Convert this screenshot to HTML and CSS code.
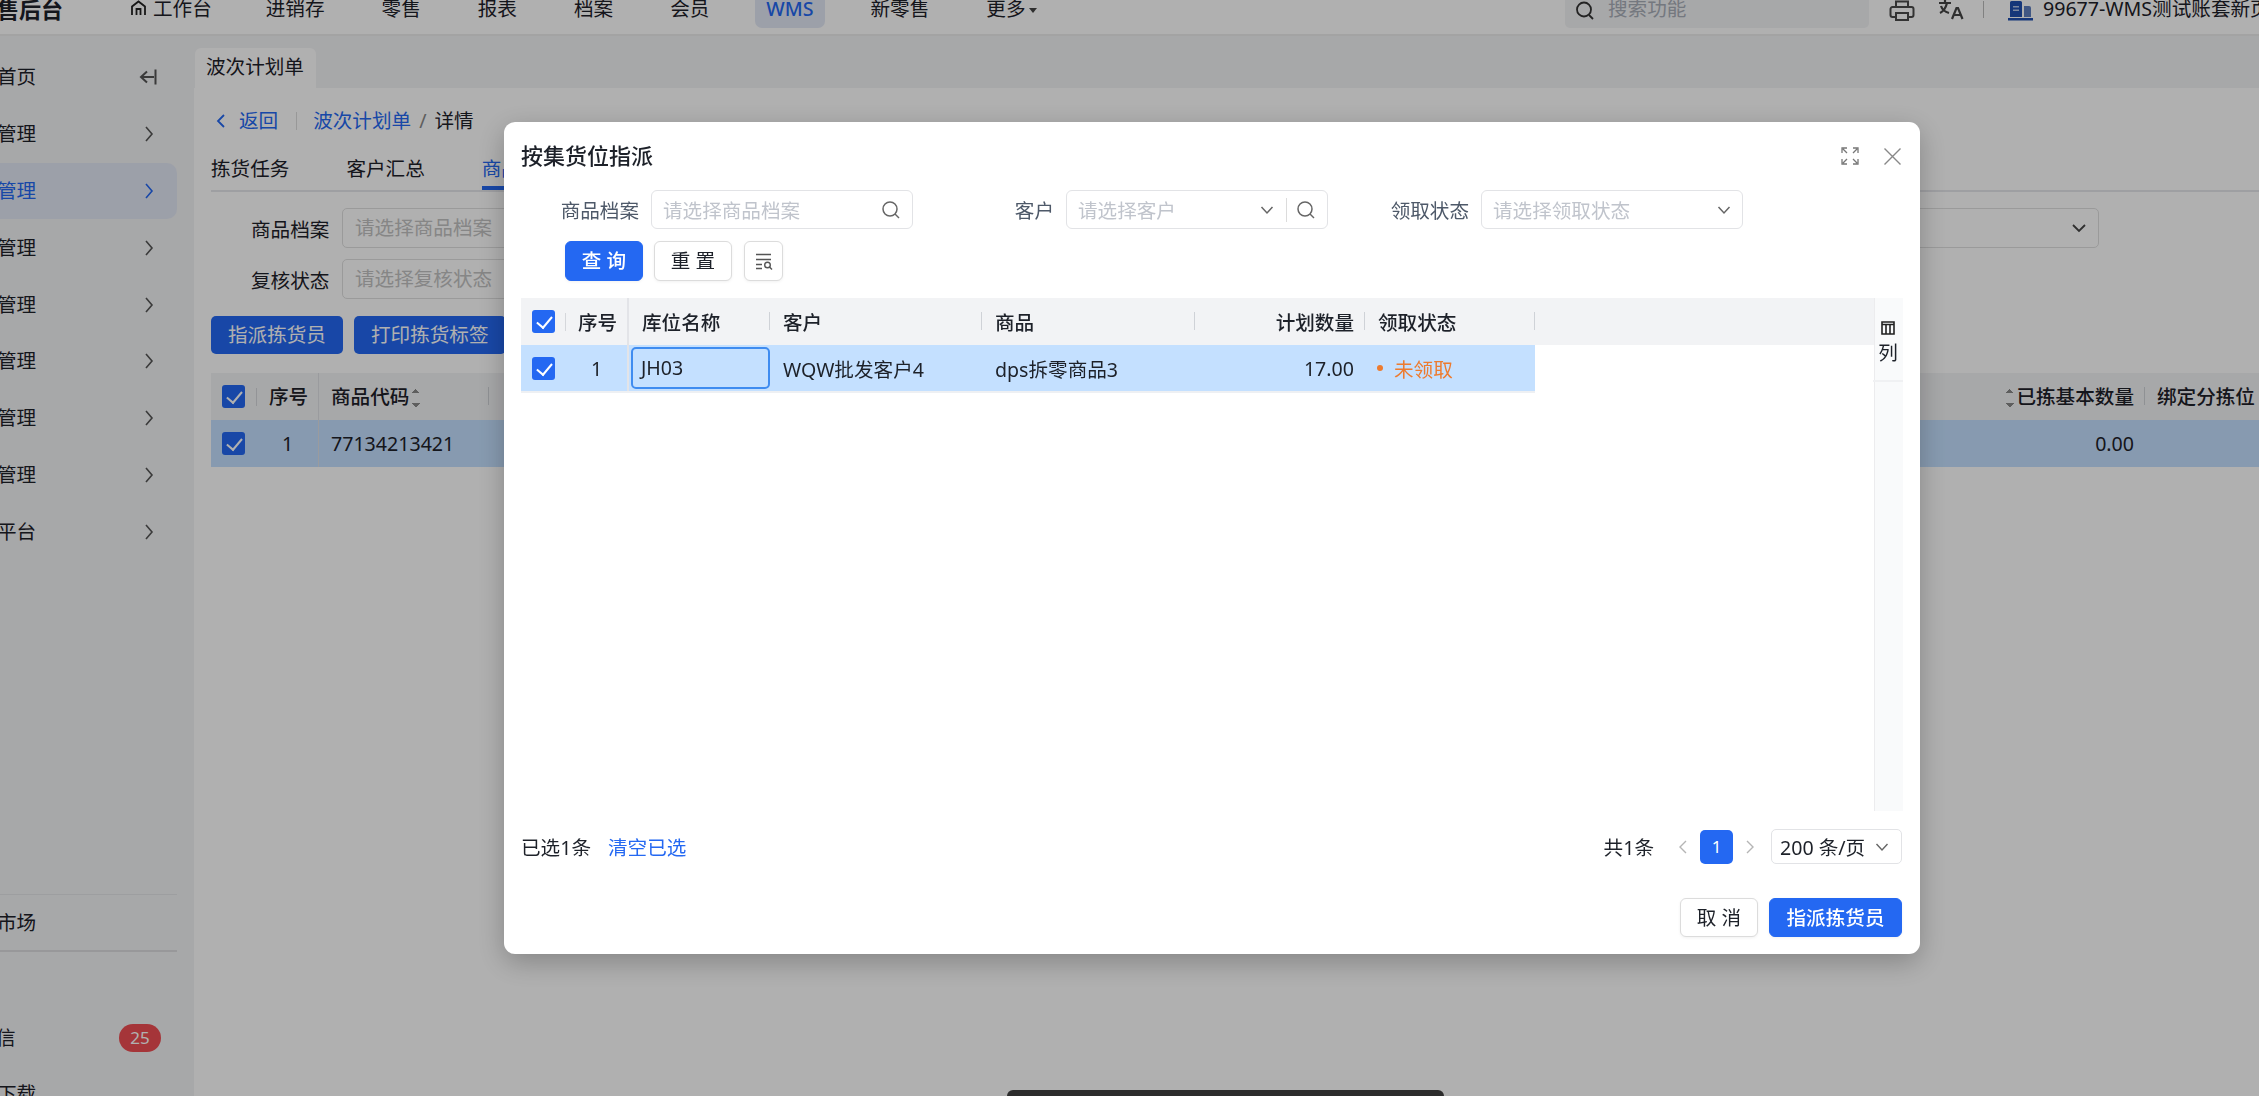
FILE: index.html
```html
<!DOCTYPE html>
<html lang="zh-CN">
<head>
  <meta charset="UTF-8" />
  <title>按集货位指派</title>
  <link rel="stylesheet" href="styles.css">
</head>
<body>
  <header class="topbar">
    <div class="brand">售后台</div>
    <nav class="nav">
      <span class="nav-item nav-home">
        <svg class="home-icon" width="17" height="17" viewBox="0 0 17 17"><path d="M2 15V6.500L8.500 1.500 15 6.500V15M6.500 15V9h4v6" fill="none" stroke="#222" stroke-width="1.800"/></svg>
        工作台
      </span>
      <span class="nav-item">进销存</span>
      <span class="nav-item">零售</span>
      <span class="nav-item">报表</span>
      <span class="nav-item">档案</span>
      <span class="nav-item">会员</span>
      <span class="nav-item nav-active">WMS</span>
      <span class="nav-item">新零售</span>
      <span class="nav-item">更多<i class="caret"></i></span>
    </nav>
    <div class="top-right">
      <div class="top-search">
        <svg width="22" height="22" viewBox="0 0 22 22"><circle cx="10" cy="9.500" r="7" fill="none" stroke="#333" stroke-width="1.800"/><path d="M15 15l4 4" stroke="#333" stroke-width="1.800"/></svg>
        <span>搜索功能</span>
      </div>
      <svg class="print-icon" width="26" height="22" viewBox="0 0 26 22"><path d="M7 7V1.500h12V7M7 17H3.500a2 2 0 0 1-2-2V9a2 2 0 0 1 2-2h19a2 2 0 0 1 2 2v6a2 2 0 0 1-2 2H19M7 13h12v7H7z" fill="none" stroke="#4a4a4a" stroke-width="2"/></svg>
      <svg class="lang-icon" width="26" height="20" viewBox="0 0 26 20"><path d="M1 3h12M7 0v3M2 13c4-2 6-6 7-10M3 6c1 3 4 6 8 7" fill="none" stroke="#444" stroke-width="2.200"/><path d="M14 19l4.500-11h1.500L24.500 19M15.800 15h7" fill="none" stroke="#444" stroke-width="2.200"/></svg>
      <i class="top-divider"></i>
      <svg class="org-icon" width="26" height="20" viewBox="0 0 26 20"><path d="M2 1.500a1.500 1.500 0 0 1 1.500-1.500h9a1.500 1.500 0 0 1 1.500 1.500V16H2z" fill="#1f4fb0"/><path d="M16 5h5a2 2 0 0 1 2 2v9h-7z" fill="#5f7fbe"/><path d="M0 17h25v2.500H0z" fill="#1f4fb0"/><path d="M5 5h6v1.500H5zM5 8.500h6V10H5z" fill="#b3c4e6"/></svg>
      <span class="org-name">99677-WMS测试账套新页面</span>
    </div>
  </header>

  <div class="layout">
    <aside class="sidebar">
      <ul class="side-menu">
        <li class="side-item"><span class="side-label">首页</span>
          <svg class="side-toggle" width="18" height="16" viewBox="0 0 18 16"><path d="M8 2.500L2 8l6 5.500M2 8h13M16.500 .500v15" fill="none" stroke="#555" stroke-width="2"/></svg>
        </li>
        <li class="side-item"><span class="side-label">管理</span><svg class="chev" width="10" height="18" viewBox="0 0 10 18"><path d="M2 2l6 7-6 7" fill="none" stroke="#555" stroke-width="1.600"/></svg></li>
        <li class="side-item side-active"><span class="side-label">管理</span><svg class="chev" width="10" height="18" viewBox="0 0 10 18"><path d="M2 2l6 7-6 7" fill="none" stroke="#2468f2" stroke-width="1.600"/></svg></li>
        <li class="side-item"><span class="side-label">管理</span><svg class="chev" width="10" height="18" viewBox="0 0 10 18"><path d="M2 2l6 7-6 7" fill="none" stroke="#555" stroke-width="1.600"/></svg></li>
        <li class="side-item"><span class="side-label">管理</span><svg class="chev" width="10" height="18" viewBox="0 0 10 18"><path d="M2 2l6 7-6 7" fill="none" stroke="#555" stroke-width="1.600"/></svg></li>
        <li class="side-item"><span class="side-label">管理</span><svg class="chev" width="10" height="18" viewBox="0 0 10 18"><path d="M2 2l6 7-6 7" fill="none" stroke="#555" stroke-width="1.600"/></svg></li>
        <li class="side-item"><span class="side-label">管理</span><svg class="chev" width="10" height="18" viewBox="0 0 10 18"><path d="M2 2l6 7-6 7" fill="none" stroke="#555" stroke-width="1.600"/></svg></li>
        <li class="side-item"><span class="side-label">管理</span><svg class="chev" width="10" height="18" viewBox="0 0 10 18"><path d="M2 2l6 7-6 7" fill="none" stroke="#555" stroke-width="1.600"/></svg></li>
        <li class="side-item"><span class="side-label">平台</span><svg class="chev" width="10" height="18" viewBox="0 0 10 18"><path d="M2 2l6 7-6 7" fill="none" stroke="#555" stroke-width="1.600"/></svg></li>
      </ul>
      <div class="side-market"><span class="side-label">市场</span></div>
      <div class="side-msg"><span class="side-label side-short">信</span><span class="side-badge">25</span></div>
      <div class="side-down"><span class="side-label">下载</span></div>
    </aside>

    <main class="main">
      <div class="page-tabs"><div class="page-tab">波次计划单</div></div>
      <div class="page-body">
        <div class="crumbs">
          <svg width="10" height="16" viewBox="0 0 10 16"><path d="M8 2L2 8l6 6" fill="none" stroke="#2468f2" stroke-width="1.800"/></svg>
          <span class="crumb-link">返回</span>
          <i class="crumb-sep"></i>
          <span class="crumb-link">波次计划单</span>
          <span class="crumb-slash">/</span>
          <span>详情</span>
        </div>
        <div class="detail-tabs">
          <span class="detail-tab">拣货任务</span>
          <span class="detail-tab">客户汇总</span>
          <span class="detail-tab detail-tab-on">商品汇总</span>
        </div>
        <div class="bg-filter">
          <span class="bg-label">商品档案</span>
          <span class="bg-input">请选择商品档案</span>
          <span class="bg-select">
            <svg width="16" height="10" viewBox="0 0 16 10"><path d="M2 2l6 6 6-6" fill="none" stroke="#444" stroke-width="1.800"/></svg>
          </span>
        </div>
        <div class="bg-filter bg-filter-second">
          <span class="bg-label">复核状态</span>
          <span class="bg-input">请选择复核状态</span>
        </div>
        <div class="bg-actions">
          <span class="bg-btn">指派拣货员</span>
          <span class="bg-btn">打印拣货标签</span>
        </div>
        <div class="bg-table">
          <div class="bg-row bg-head">
            <div class="bg-first"><i class="check"></i><i class="mini-sep"></i><span>序号</span></div>
            <div class="bg-code th-sep">商品代码<i class="sort"></i></div>
            <div class="bg-fill"></div>
            <div class="bg-qty th-sep"><i class="sort"></i>已拣基本数量</div>
            <div class="bg-bind">绑定分拣位</div>
          </div>
          <div class="bg-row bg-body">
            <div class="bg-first"><i class="check"></i><span class="bg-num">1</span></div>
            <div class="bg-code">77134213421</div>
            <div class="bg-fill"></div>
            <div class="bg-qty">0.00</div>
            <div class="bg-bind"></div>
          </div>
        </div>
      </div>
    </main>
  </div>

  <div class="overlay"></div>
  <div class="home-bar"></div>

  <section class="modal">
    <div class="modal-head">
      <h2>按集货位指派</h2>
      <div class="modal-tools">
        <svg width="18" height="18" viewBox="0 0 18 18"><path d="M1 6V1h5M12 1h5v5M17 12v5h-5M6 17H1v-5M2 2l4 4M16 2l-4 4M16 16l-4-4M2 16l4-4" fill="none" stroke="#777" stroke-width="1.300"/></svg>
        <svg width="19" height="19" viewBox="0 0 19 19"><path d="M1.500 1.500l16 16M17.500 1.500l-16 16" fill="none" stroke="#888" stroke-width="1.400"/></svg>
      </div>
    </div>

    <div class="filters">
      <div class="filter">
        <label>商品档案</label>
        <div class="field">
          <span class="placeholder">请选择商品档案</span>
          <svg class="search-icon" width="20" height="20" viewBox="0 0 20 20"><circle cx="9" cy="9" r="7" fill="none" stroke="#666" stroke-width="1.500"/><path d="M14 14l4 4" stroke="#666" stroke-width="1.500"/></svg>
        </div>
      </div>
      <div class="filter">
        <label>客户</label>
        <div class="field">
          <span class="placeholder">请选择客户</span>
          <svg class="field-chev" width="14" height="10" viewBox="0 0 14 10"><path d="M1.500 2l5.500 6 5.500-6" fill="none" stroke="#666" stroke-width="1.500"/></svg>
          <i class="field-sep"></i>
          <svg class="search-icon" width="20" height="20" viewBox="0 0 20 20"><circle cx="9" cy="9" r="7" fill="none" stroke="#666" stroke-width="1.500"/><path d="M14 14l4 4" stroke="#666" stroke-width="1.500"/></svg>
        </div>
      </div>
      <div class="filter">
        <label>领取状态</label>
        <div class="field">
          <span class="placeholder">请选择领取状态</span>
          <svg width="14" height="10" viewBox="0 0 14 10"><path d="M1.500 2l5.500 6 5.500-6" fill="none" stroke="#666" stroke-width="1.500"/></svg>
        </div>
      </div>
    </div>

    <div class="filter-actions">
      <button class="btn btn-primary">查 询</button>
      <button class="btn">重 置</button>
      <button class="btn btn-icon">
        <svg width="18" height="18" viewBox="0 0 18 18"><path d="M1 2.500h15M1 7.500h15M1 12.500h6M1 16.500h6" fill="none" stroke="#555" stroke-width="1.400"/><circle cx="12.500" cy="13" r="2.800" fill="none" stroke="#555" stroke-width="1.400"/><path d="M14.500 15l2.500 2.500" stroke="#555" stroke-width="1.400"/></svg>
      </button>
    </div>

    <div class="table-area">
      <div class="table-main">
        <div class="table-head">
          <div class="cols">
            <div class="cell cell-first"><i class="check"></i><i class="mini-sep"></i><span>序号</span></div>
            <div class="cell th-sep">库位名称</div>
            <div class="cell th-sep">客户</div>
            <div class="cell th-sep">商品</div>
            <div class="cell cell-right th-sep">计划数量</div>
            <div class="cell th-sep">领取状态</div>
          </div>
        </div>
        <div class="cols row-selected">
          <div class="cell cell-first"><i class="check"></i><span class="row-num">1</span></div>
          <div class="cell cell-edit"><div class="edit-box">JH03</div></div>
          <div class="cell">WQW批发客户4</div>
          <div class="cell">dps拆零商品3</div>
          <div class="cell cell-right">17.00</div>
          <div class="cell status"><i class="status-dot"></i>未领取</div>
        </div>
      </div>
      <div class="col-panel">
        <div class="col-btn">
          <svg width="14" height="14" viewBox="0 0 14 14"><path d="M1 1h12v12H1zM1 3.500h12M5 3.500V13M9 3.500V13" fill="none" stroke="#222" stroke-width="1.600"/></svg>
          <span>列</span>
        </div>
      </div>
    </div>

    <div class="table-foot">
      <div class="foot-left">
        <span>已选1条</span>
        <a class="clear-link">清空已选</a>
      </div>
      <div class="pager">
        <span class="pager-total">共1条</span>
        <svg width="10" height="16" viewBox="0 0 10 16"><path d="M8 2L2 8l6 6" fill="none" stroke="#b5b5b5" stroke-width="1.400"/></svg>
        <span class="page-num">1</span>
        <svg width="10" height="16" viewBox="0 0 10 16"><path d="M2 2l6 6-6 6" fill="none" stroke="#b5b5b5" stroke-width="1.400"/></svg>
        <div class="page-size">
          <span>200 条/页</span>
          <svg width="14" height="10" viewBox="0 0 14 10"><path d="M1.500 2l5.500 6 5.500-6" fill="none" stroke="#666" stroke-width="1.400"/></svg>
        </div>
      </div>
    </div>

    <div class="modal-foot">
      <button class="btn btn-cancel">取 消</button>
      <button class="btn btn-primary btn-assign">指派拣货员</button>
    </div>
  </section>
</body>
</html>
```

FILE: styles.css
```css
* {
  box-sizing: border-box;
  font-family: "Noto Sans", "Noto Sans CJK SC", sans-serif;
}

html, body {
  height: 100%;
}

body {
  margin: 0;
  width: 2259px;
  height: 1096px;
  overflow: hidden;
  background: #fff;
  color: #1d2129;
  font-size: 19.6px;
}

i {
  font-style: normal;
}

/* top bar */
.topbar {
  display: flex;
  height: 36px;
  background: #fff;
  border-bottom: 2px solid #ececec;
  line-height: 18px;
  overflow: hidden;
}

.brand {
  width: 133px;
  margin-left: -3px;
  font-size: 22px;
  font-weight: 700;
  line-height: 18px;
  flex-shrink: 0;
}

.nav {
  display: flex;
  height: 28px;
}

.nav-item {
  white-space: nowrap;
  margin-right: 57px;
}

.nav-home {
  display: flex;
  align-items: flex-start;
  gap: 6px;
  margin-right: 54px;
}

.nav-active {
  height: 28px;
  margin: 0 46px 0 -11px;
  padding: 0 11px;
  background: #e3e8f5;
  color: #2468f2;
  border-radius: 0 0 7px 7px;
  font-weight: 500;
}

.caret {
  display: inline-block;
  width: 0;
  height: 0;
  margin-left: 4px;
  vertical-align: 3px;
  border: 4px solid transparent;
  border-top: 5px solid #444;
  border-bottom: 0;
}

.top-right {
  position: absolute;
  left: 1565px;
  top: 0;
  display: flex;
  width: 694px;
  height: 28px;
  overflow: hidden;
}

.top-right > * {
  flex-shrink: 0;
}

.top-search {
  display: flex;
  align-items: flex-start;
  gap: 12px;
  width: 304px;
  height: 28px;
  padding-left: 9px;
  background: #f2f3f5;
  border-radius: 0 0 5px 5px;
  color: #a9aeb8;
}

.print-icon {
  margin: 0 0 0 20px;
}

.lang-icon {
  margin: 0 0 0 23px;
}

.top-divider {
  width: 1px;
  height: 17px;
  margin: 1px 0 0 19px;
  background: #bbb;
}

.org-icon {
  margin: 1px 0 0 24px;
}

.org-name {
  margin-left: 9px;
  white-space: nowrap;
}

/* page layout */
.layout {
  display: flex;
  height: 1060px;
}

.sidebar {
  width: 194px;
  flex-shrink: 0;
  overflow: hidden;
  background: #f2f3f5;
}

.side-menu {
  width: 177px;
  margin: 0;
  padding: 13px 0 0;
  list-style: none;
}

.side-item {
  display: flex;
  align-items: center;
  justify-content: space-between;
  height: 56.8px;
  padding-right: 23px;
  border-radius: 0 10px 10px 0;
}

.side-item svg {
  flex-shrink: 0;
}

.side-toggle {
  margin-right: -3px;
}

.side-label {
  margin-left: -3px;
  line-height: 24px;
}

.side-short {
  margin-left: -4px;
}

.side-active {
  background: #e3e8f5;
  color: #2468f2;
}

.side-market {
  display: flex;
  align-items: center;
  width: 177px;
  height: 58px;
  margin-top: 334px;
  border-top: 1px solid #e4e5e8;
  border-bottom: 2px solid #dcdde0;
}

.side-msg {
  display: flex;
  align-items: center;
  justify-content: space-between;
  width: 161px;
  height: 56px;
  margin-top: 58px;
}

.side-badge {
  width: 42px;
  height: 28px;
  border-radius: 14px;
  background: #f04e53;
  color: #fff;
  font-size: 17px;
  line-height: 28px;
  text-align: center;
}

.side-down {
  display: flex;
  align-items: center;
  height: 56px;
}

/* page behind the dialog */
.main {
  flex: 1;
  min-width: 0;
  overflow: hidden;
}

.page-tabs {
  height: 52px;
  padding: 12px 0 0 1px;
  background: #f2f3f5;
}

.page-tab {
  width: 121px;
  height: 40px;
  padding-left: 11px;
  background: #fff;
  border-radius: 6px 6px 0 0;
  line-height: 38px;
}

.page-body {
  padding: 21px 0 0 17px;
}

.crumbs {
  display: flex;
  align-items: center;
  height: 24px;
  line-height: 24px;
}

.crumbs svg {
  margin: 0 13px 0 5px;
}

.crumb-link {
  color: #2468f2;
}

.crumb-sep {
  width: 1px;
  height: 18px;
  margin: 0 16px 0 18px;
  background: #ddd;
}

.crumb-slash {
  margin: 0 8px;
  color: #888;
}

.detail-tabs {
  display: flex;
  gap: 57px;
  height: 47px;
  margin-top: 12px;
  padding-top: 12px;
  border-bottom: 2px solid #e5e6eb;
  line-height: 24px;
}

.detail-tab-on {
  color: #2468f2;
  border-bottom: 4px solid #2468f2;
}

.bg-filter {
  display: flex;
  align-items: center;
  height: 40px;
  margin-top: 16px;
  padding-left: 40px;
}

.bg-filter-second {
  margin-top: 11px;
}

.bg-label {
  width: 91px;
  flex-shrink: 0;
}

.bg-input {
  width: 400px;
  height: 40px;
  padding-left: 12px;
  border: 1px solid #e0e0e0;
  border-radius: 5px;
  color: #c2c2c2;
  line-height: 38px;
}

.bg-select {
  display: flex;
  align-items: center;
  justify-content: flex-end;
  width: 300px;
  height: 40px;
  margin-left: 1057px;
  padding-right: 11px;
  border: 1px solid #e0e0e0;
  border-radius: 5px;
}

.bg-actions {
  display: flex;
  gap: 11px;
  margin-top: 17px;
}

.bg-btn {
  padding: 0 17px;
  height: 38px;
  background: #2468f2;
  color: #fff;
  border-radius: 5px;
  line-height: 38px;
  white-space: nowrap;
}

.bg-table {
  margin-top: 19px;
}

.bg-row {
  display: flex;
  align-items: stretch;
  height: 47px;
  line-height: 47px;
}

.bg-head {
  background: #f2f3f5;
  font-weight: 500;
}

.bg-body {
  background: #c4e0ff;
}

.bg-first {
  display: flex;
  align-items: center;
  width: 108px;
  padding-left: 11px;
  border-right: 1px solid #dfe1e5;
  flex-shrink: 0;
}

.bg-first .mini-sep {
  margin: 0 12px 0 11px;
}

.bg-num {
  margin-left: 37px;
}

.bg-code {
  position: relative;
  width: 170px;
  padding-left: 12px;
  flex-shrink: 0;
  white-space: nowrap;
}

.bg-fill {
  flex: 1;
}

.bg-qty {
  position: relative;
  width: 169px;
  padding-right: 11px;
  text-align: right;
  white-space: nowrap;
}

.bg-bind {
  width: 114px;
  padding-left: 12px;
  white-space: nowrap;
  overflow: hidden;
}

.sort {
  display: inline-block;
  width: 8px;
  height: 18px;
  margin: 0 2px 0 3px;
  vertical-align: -3px;
  background:
    linear-gradient(135deg, transparent 50%, #888 50%) 0 0 / 4px 4px no-repeat,
    linear-gradient(225deg, transparent 50%, #888 50%) 4px 0 / 4px 4px no-repeat,
    linear-gradient(45deg, transparent 50%, #888 50%) 0 14px / 4px 4px no-repeat,
    linear-gradient(315deg, transparent 50%, #888 50%) 4px 14px / 4px 4px no-repeat;
}

.check {
  position: relative;
  display: block;
  width: 23px;
  height: 23px;
  flex-shrink: 0;
  background: #2468f2;
  border-radius: 3px;
}

.check::after {
  content: "";
  position: absolute;
  left: 8px;
  top: 3px;
  width: 7px;
  height: 13px;
  border-right: 2.500px solid #fff;
  border-bottom: 2.500px solid #fff;
  transform: rotate(40deg);
}

.mini-sep {
  display: block;
  width: 1px;
  height: 18px;
  background: #d5d7db;
  flex-shrink: 0;
}

/* dim layer */
.overlay {
  position: fixed;
  inset: 0;
  background: rgba(0, 0, 0, 0.31);
}

.home-bar {
  position: fixed;
  left: 1007px;
  bottom: 0;
  width: 437px;
  height: 6px;
  background: #2c2c2c;
  border-radius: 7px 7px 0 0;
}

/* dialog */
.modal {
  position: fixed;
  left: 504px;
  top: 122px;
  width: 1416px;
  height: 832px;
  padding: 17px;
  background: #fff;
  border-radius: 11px;
  box-shadow: 0 8px 28px rgba(0, 0, 0, 0.25);
}

.modal-head {
  display: flex;
  align-items: center;
  justify-content: space-between;
  height: 34px;
}

.modal-head h2 {
  margin: -3px 0 0;
  font-size: 22px;
  font-weight: 500;
  line-height: 34px;
}

.modal-tools {
  display: flex;
  align-items: center;
  gap: 24px;
  padding-right: 1px;
}

.modal-tools svg {
  display: block;
}

.filters {
  display: grid;
  grid-template-columns: repeat(3, 415px);
  margin-top: 17px;
}

.filter {
  display: flex;
  align-items: center;
  gap: 12px;
}

.filter label {
  width: 118px;
  flex-shrink: 0;
  color: #4e5969;
  text-align: right;
}

.field {
  display: flex;
  align-items: center;
  width: 262px;
  height: 39px;
  padding: 0 11px 0 11px;
  border: 1.500px solid #e2e3e6;
  border-radius: 6px;
}

.placeholder {
  flex: 1;
  color: #c0c4cc;
}

.field-chev {
  margin-right: 12px;
}

.field-sep {
  width: 1px;
  height: 24px;
  margin-right: 9px;
  background: #dcdcdc;
}

.filter-actions {
  display: flex;
  gap: 11px;
  margin-top: 12px;
  padding-left: 44px;
}

.btn {
  height: 40px;
  padding: 0;
  background: #fff;
  border: 1.500px solid #dcdcdc;
  border-radius: 6px;
  color: #1d2129;
  font-size: 19.6px;
  line-height: 1;
  width: 78px;
  box-shadow: 0 1px 3px rgba(0, 0, 0, 0.06);
}

.btn-primary {
  background: #2468f2;
  border-color: #2468f2;
  color: #fff;
  font-weight: 500;
}

.btn-icon {
  display: flex;
  align-items: center;
  justify-content: center;
  width: 39px;
  margin-left: 1px;
}

/* table */
.table-area {
  display: flex;
  height: 513px;
  margin-top: 17px;
}

.table-main {
  width: 1353px;
  flex-shrink: 0;
}

.table-head {
  height: 47px;
  background: #f2f3f5;
  font-weight: 500;
}

.cols {
  display: grid;
  grid-template-columns: 108px 141px 212px 213px 170px 170px;
  width: 1014px;
}

.table-head .cols {
  height: 47px;
}

.cell {
  position: relative;
  display: flex;
  align-items: center;
  padding: 0 13px;
  white-space: nowrap;
}

.cell-first {
  padding: 0 0 0 11px;
  border-right: 2px solid #e3e4e8;
}

.cell-first .mini-sep {
  margin: 0 12px 0 10px;
}

.cell-right {
  justify-content: flex-end;
  padding-right: 11px;
}

.th-sep::after {
  content: "";
  position: absolute;
  right: 0;
  top: 14px;
  width: 1.500px;
  height: 18px;
  background: #cfd2d7;
}

.row-selected {
  height: 48px;
  background: #c4e0ff;
  border-bottom: 2px solid #eef0f3;
}

.row-num {
  margin-left: 36px;
}

.cell-edit {
  padding: 2px 0 2px 2px;
}

.edit-box {
  width: 100%;
  height: 42px;
  padding-left: 8px;
  border: 2px solid #3f8cf0;
  border-radius: 5px;
  line-height: 38px;
}

.status {
  padding-left: 10px;
  color: #ed7b2f;
}

.status-dot {
  width: 6px;
  height: 6px;
  margin: 0 11px 0 2px;
  border-radius: 50%;
  background: #ed7b2f;
}

.col-panel {
  width: 29px;
  flex-shrink: 0;
  background: #f9fafb;
  border-left: 1px solid #ececee;
}

.col-btn {
  display: flex;
  flex-direction: column;
  align-items: center;
  height: 84px;
  margin-left: -2px;
  padding-top: 23px;
  border-bottom: 2px solid #f0f1f3;
}

.col-btn span {
  margin-top: 5px;
  line-height: 26px;
}

/* footer of the list */
.table-foot {
  display: flex;
  align-items: center;
  justify-content: space-between;
  height: 35px;
  margin-top: 18px;
}

.foot-left {
  display: flex;
  gap: 17px;
}

.clear-link {
  color: #2468f2;
}

.pager {
  display: flex;
  align-items: center;
  margin-right: 1px;
}

.pager-total {
  margin-right: 24px;
}

.page-num {
  width: 33px;
  height: 34px;
  margin: 0 12px;
  background: #2468f2;
  border-radius: 5px;
  color: #fff;
  font-size: 17px;
  line-height: 34px;
  text-align: center;
}

.page-size {
  display: flex;
  align-items: center;
  justify-content: space-between;
  width: 131px;
  height: 35px;
  margin-left: 16px;
  padding: 0 12px 0 8px;
  border: 1.500px solid #e2e3e6;
  border-radius: 5px;
  white-space: nowrap;
}

.modal-foot {
  display: flex;
  justify-content: flex-end;
  gap: 11px;
  margin: 34px 1px 0 0;
}

.btn-cancel {
  height: 39px;
}

.btn-assign {
  width: 133px;
  height: 39px;
}
```
